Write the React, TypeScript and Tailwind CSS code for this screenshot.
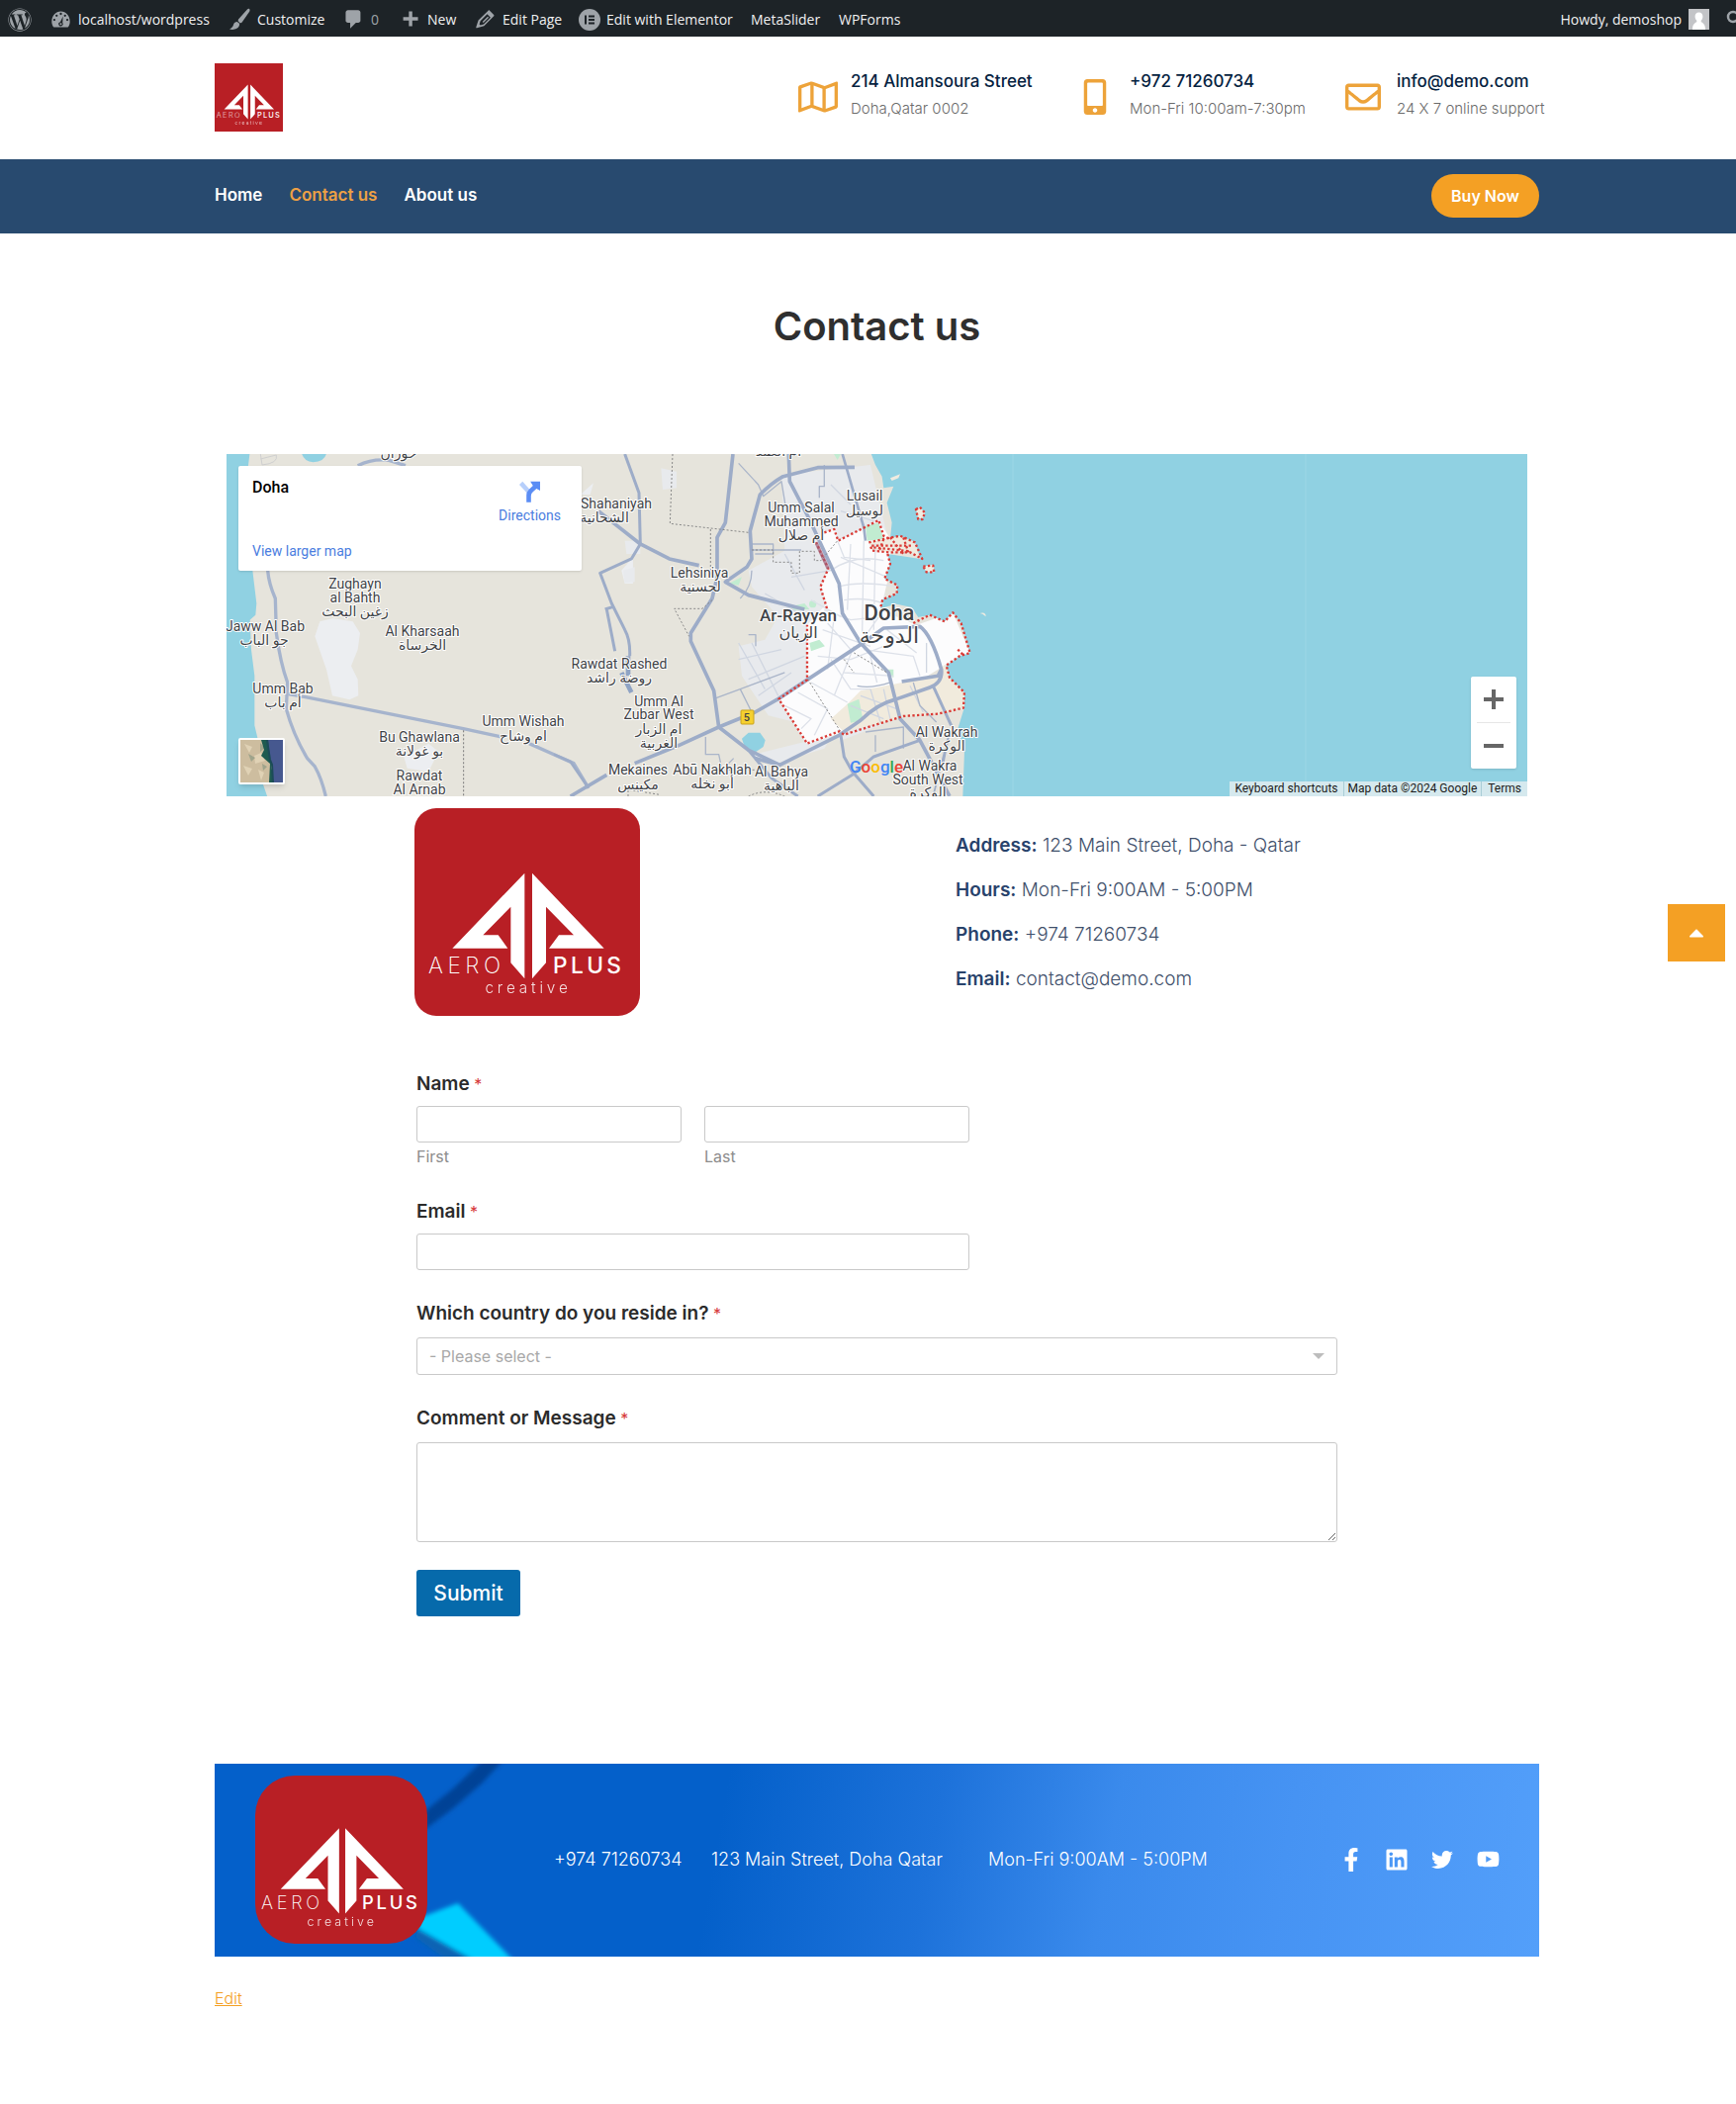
import React from "react";
import {
  FaCaretUp,
  FaFacebookF,
  FaLinkedin,
  FaMobileAlt,
  FaRegEnvelope,
  FaRegMap,
  FaTwitter,
  FaWordpress,
  FaYoutube,
} from "react-icons/fa";

const container = "mx-auto w-full max-w-[1339px]";

function DashIcon({ className, children }: { className?: string; children: React.ReactNode }) {
  return (
    <svg viewBox="0 0 20 20" className={`size-[23px] shrink-0 fill-[#9ea3a8] ${className ?? ""}`} aria-hidden="true">
      {children}
    </svg>
  );
}

function AdminBar() {
  const link = "flex items-center whitespace-nowrap";
  return (
    <div className="flex h-[37px] items-center bg-[#1d2327] pt-[2px] pl-2 font-['Open_Sans',sans-serif] text-[14px] text-[#f0f0f1]">
      <a href="#wp" aria-label="About WordPress" className="mr-[18px]">
        <FaWordpress className="size-6 text-[#9ea3a8]" />
      </a>
      <a href="#site" className={`${link} mr-[17px] w-[164px] gap-[6px]`}>
        <DashIcon>
          <path
            fillRule="evenodd"
            d="M3.8 17h12.4c1.1-1.3 1.8-3 1.8-4.9C18 7 14.500 3 10 3S2 7 2 12.100C2 14 2.700 15.700 3.800 17zM10 4.200a1 1 0 110 2 1 1 0 010-2zM6.300 5.800a1 1 0 110 2 1 1 0 010-2zM13.700 5.800a1 1 0 110 2 1 1 0 010-2zM4.300 9.500a1 1 0 110 2 1 1 0 010-2zM15.700 9.500a1 1 0 110 2 1 1 0 010-2zM11.900 7.300l-.4 5.800a1.900 1.900 0 11-2-.8zM10 13.200a.9.9 0 100 1.800.9.9 0 000-1.800z"
          />
        </DashIcon>
        localhost/wordpress
      </a>
      <a href="#customize" className={`${link} mr-[15px] w-[100px] gap-[6px]`}>
        <DashIcon>
          <path d="M18.300.9c-.5-.4-1.200-.2-1.800.4L8.900 9.800c-.4.500-.6 1.300-.3 1.900l1.500 1.500c.6.300 1.400 0 1.800-.6l6.500-9.400c.5-.8.500-1.700-.1-2.300zM7.600 12.100c-1.500.1-2.700.8-3.100 2.200-.4 1.500-.9 2.900-3.600 4.300 2 .8 7.600.9 8.700-3.500.1-.5.1-.9 0-1.300z" />
        </DashIcon>
        Customize
      </a>
      <a href="#comments" className={`${link} mr-[16px] w-[41px] gap-[6px] text-[#9ea3a8]`} aria-label="0 comments">
        <DashIcon>
          <path d="M5 2h9q.82 0 1.410.59T16 4v7q0 .82-.59 1.410T14 13h-2l-5 5v-5H5q-.82 0-1.410-.59T3 11V4q0-.82.590-1.410T5 2z" />
        </DashIcon>
        0
      </a>
      <a href="#new" className={`${link} mr-[17px] w-[59px] gap-[6px]`}>
        <DashIcon>
          <path d="M17 8v3h-5v5H9v-5H4V8h5V3h3v5h5z" />
        </DashIcon>
        New
      </a>
      <a href="#edit" className={`${link} mr-[14px] w-[92px] gap-[6px]`}>
        <DashIcon>
          <path
            fillRule="evenodd"
            d="M13.900 2.300l3.700 3.700c.3.300.3.800 0 1.200L9 15.800l-6.300 1.900c-.5.100-.8-.2-.7-.7l2-6.100 8.700-8.600c.4-.4.900-.4 1.200 0zM5.800 11.600l-.9 2.800.9.9 2.900-.9 6-6-2.900-2.900zM7.600 12.200l4.600-4.600.9.900-4.600 4.600z"
          />
        </DashIcon>
        Edit Page
      </a>
      <a href="#elementor" className={`${link} mr-[17px] w-[157px] gap-[6px]`}>
        <svg viewBox="0 0 22 22" className="size-[22px] shrink-0" aria-hidden="true">
          <circle cx="11" cy="11" r="11" fill="#9ea3a8" />
          <path d="M6 6.500H8V15.500H6ZM10 6.500H16V8.500H10ZM10 10H16V12H10ZM10 13.500H16V15.500H10Z" fill="#1d2327" />
        </svg>
        Edit with Elementor
      </a>
      <a href="#metaslider" className={`${link} mr-[17px] w-[72px]`}>
        MetaSlider
      </a>
      <a href="#wpforms" className={link}>
        WPForms
      </a>
      <a href="#profile" className={`${link} ml-auto gap-[7px]`}>
        Howdy, demoshop
        <svg viewBox="0 0 21 21" className="size-[21px]" aria-hidden="true">
          <rect width="21" height="21" fill="#c3c4c7" />
          <path d="M10.500 3.500c2.600 0 3.900 1.800 3.900 4.200 0 1.600-.7 3.100-1.700 4v1.600c1.900.9 4.300 2.200 4.300 7.700H4c0-5.500 2.400-6.800 4.300-7.700v-1.600c-1-.9-1.700-2.400-1.700-4 0-2.400 1.300-4.200 3.900-4.200z" fill="#fff" />
        </svg>
      </a>
      <button aria-label="Search" className="mr-2 ml-[17px]">
        <svg viewBox="0 0 20 20" className="size-5" fill="none" stroke="#9ea3a8" strokeWidth="2.500" aria-hidden="true">
          <circle cx="7" cy="7" r="5" />
          <path d="M11 11l7 7" />
        </svg>
      </button>
    </div>
  );
}

function Logo({ className }: { className: string }) {
  return (
    <div className={`overflow-hidden bg-[#b81f25] ${className}`}>
      <svg
        viewBox="0 0 684 630"
        preserveAspectRatio="xMidYMid slice"
        className="size-full"
        role="img"
        aria-label="Aero Plus creative"
      >
        <g fill="#fff">
          <path d="M334 197V517L292 469V299L208 385H254L283 425H115Z" />
          <path d="M357 197L575 425H408L438 385H483L399 299V469L357 517Z" />
        </g>
        <g fill="#fff" fontFamily="Inter, sans-serif">
          <text x="42" y="501" fontSize="68" fontWeight="200" className="tracking-[0.2em]">
            AERO
          </text>
          <text x="420" y="501" fontSize="68" fontWeight="500" className="tracking-[0.15em]">
            PLUS
          </text>
          <text x="345" y="562" fontSize="46" fontWeight="300" textAnchor="middle" opacity="0.85" className="tracking-[0.25em]">
            creative
          </text>
        </g>
      </svg>
    </div>
  );
}

const contacts = [
  { icon: <FaRegMap className="size-10" />, iconBox: "w-[53px]", title: "214 Almansoura Street", sub: "Doha,Qatar 0002", box: "w-[282px]" },
  { icon: <FaMobileAlt className="size-9" />, iconBox: "w-[53px]", title: "+972 71260734", sub: "Mon-Fri 10:00am-7:30pm", box: "w-[271px]" },
  { icon: <FaRegEnvelope className="size-9" />, iconBox: "w-[52px]", title: "info@demo.com", sub: "24 X 7 online support", box: "w-[196px]" },
];

function Header() {
  return (
    <header>
      <div className={`${container} flex h-[124px] items-center justify-between`}>
        <a href="#home">
          <Logo className="-mt-px size-[69px]" />
        </a>
        <ul className="flex pb-[3px]">
          {contacts.map((c) => (
            <li key={c.title} className={`flex items-center ${c.box}`}>
              <span className={`shrink-0 text-[#eda33a] ${c.iconBox}`}>{c.icon}</span>
              <span className="-mt-[3px] whitespace-nowrap">
                <span className="block text-[17px] leading-[27px] font-medium text-[#05223f]">{c.title}</span>
                <span className="block text-[15px] leading-[27px] font-light text-[#6b6b6b]">{c.sub}</span>
              </span>
            </li>
          ))}
        </ul>
      </div>
      <div className="bg-[#284a6f]">
        <div className={`${container} flex h-[75px] items-center justify-between pb-[2px]`}>
          <nav className="flex gap-[27px] text-[17px] font-semibold text-white">
            <a href="#home">Home</a>
            <a href="#contact" className="text-[#eda045]">
              Contact us
            </a>
            <a href="#about">About us</a>
          </nav>
          <a href="#buy" className="flex h-11 w-[109px] items-center justify-center rounded-full bg-[#f4a024] text-[16px] font-semibold text-white">
            Buy Now
          </a>
        </div>
      </div>
    </header>
  );
}

type Label = [string, number, number, number?, number?];

const labels: Label[] = [
  ["حوزان", 174, 4],
  ["أم العمد", 558, 2],
  ["Zughayn", 130, 136],
  ["al Bahth", 130, 150],
  ["زغين البحث", 130, 164],
  ["Jaww Al Bab", 39, 179],
  ["جو الباب", 38, 193],
  ["Al Kharsaah", 198, 184],
  ["الخرساة", 198, 198],
  ["Umm Bab", 57, 242],
  ["أم باب", 57, 256],
  ["Bu Ghawlana", 195, 291],
  ["بو غولانة", 195, 305],
  ["Rawdat", 195, 330],
  ["Al Arnab", 195, 344],
  ["Umm Wishah", 300, 275],
  ["ام وشاح", 300, 290],
  ["Shahaniyah", 394, 55],
  ["الشحانية", 382, 69],
  ["Lehsiniya", 478, 125],
  ["لحسنية", 479, 139],
  ["Rawdat Rashed", 397, 217],
  ["روضة راشد", 397, 231],
  ["Umm Al", 437, 255],
  ["Zubar West", 437, 268],
  ["ام الزبار", 437, 283],
  ["الغربية", 437, 297],
  ["Mekaines", 416, 324],
  ["مكينس", 416, 339],
  ["Abū Nakhlah", 491, 324],
  ["أبو نخله", 491, 338],
  ["Al Bahya", 561, 326],
  ["الباهية", 561, 340],
  ["Umm Salal", 581, 59],
  ["Muhammed", 581, 73],
  ["أم صلال", 581, 87],
  ["Lusail", 645, 47],
  ["لوسيل", 645, 62],
  ["Ar-Rayyan", 578, 169, 17, 500],
  ["الريان", 578, 186, 16],
  ["Doha", 670, 168, 22, 500],
  ["الدوحة", 670, 191, 22],
  ["Al Wakrah", 728, 286],
  ["الوكرة", 728, 300],
  ["Al Wakra", 711, 320],
  ["South West", 709, 334],
  ["الوكرة", 709, 347],
];

/* Both road groups are drawn at three units per map pixel. */
function MapDrawing() {
  return (
    <svg viewBox="0 0 1315 346" preserveAspectRatio="xMinYMin slice" className="absolute inset-0 size-full bg-[#90d1e2]" role="img" aria-label="Map of Doha">
      <rect width="1315" height="346" fill="#90d1e2" />
      <rect width="760" height="346" fill="#e6e4dc" />
      <g transform="translate(-9 -9) scale(0.3333)" fill="none" strokeLinejoin="round">
        <path fill="#90d1e2" d="M20 20H98L92 70L100 130L106 380L118 480L115 515L98 530L102 620L112 700L112 850L124 900L128 1000L152 1070H20Z" />
        <path fill="#90d1e2" d="M255 25H330Q325 50 290 52Q262 50 255 25Z" />
        <path fill="#eceef1" d="M310 535L350 525L410 535L432 570L425 620L405 670L425 710L427 760L400 772L348 760L330 680L295 580Z" />
        <path fill="#eceef1" d="M565 945L640 905L670 930L640 990L575 980ZM1225 380L1260 340V420H1235ZM1100 150L1140 115L1130 150Z" />
        <path stroke="#cfcfcf" strokeWidth="3" d="M130 27L135 60M130 42L178 30Q185 55 135 60" />
        <g stroke="#a6b4cd" strokeWidth="10">
          <path d="M152 380Q155 420 175 465L178 570Q190 660 212 720L208 800Q230 880 272 950L295 975Q315 1010 328 1065" />
          <path d="M425 62Q470 40 520 46L570 62" />
          <path d="M215 755L270 765L745 860L860 885" />
          <path d="M945 905L1080 965L1125 1040" />
        </g>
        <path stroke="#777" strokeWidth="3" strokeDasharray="6 6" d="M746 865V1065" />
      </g>
      <g transform="translate(331 -9) scale(0.3333)" fill="none" strokeLinejoin="round">
        <path fill="#e8eaed" d="M690 90L960 60L1010 270L1000 560L680 770L760 900L600 940L660 970L820 920L850 870L650 820L570 700L560 610L640 590L680 520L600 430L590 380L700 320Z" />
        <path fill="#e8eaed" d="M325 70L372 80V130L330 135ZM215 290L262 290V330H220ZM210 380L245 370V415L215 418ZM680 770L770 905L860 870L880 960L1100 900V830L900 860Z" />
        <path fill="#fcfcfd" d="M820 265L850 255L862 290L985 230L1025 290L1015 400L990 500L1100 545L1210 508L1262 630L1190 665L1100 720L1040 760L880 870L768 905L682 770L768 712V545L828 480L808 430L832 375L795 295Z" />
        <path fill="#f1ebdd" d="M930 745L1160 700L1185 665L1245 755V795L1165 815L1060 825L880 870L840 830L890 785Z" />
        <path fill="#e6e4dc" d="M860 900L1040 830L1200 820L1245 860V1065H880Z" />
        <g fill="#c1ecd1">
          <path d="M945 245L985 235L1000 285L950 290ZM775 600L805 590L822 610L780 625ZM890 785L925 770L938 835L900 842ZM845 20L870 27L860 45ZM530 420L570 400L560 425ZM1012 680H1030V705L1012 695Z" />
          <circle cx="785" cy="482" r="11" />
          <path d="M715 490L760 480L775 498L730 500Z" />
        </g>
        <path
          fill="#90d1e2"
          d="M960 20L975 60L995 95L1000 130L1030 125L1010 175L1025 235L1020 285L1090 290L1112 345L1012 330L1020 360L1003 405L1042 425L1040 450L997 468L990 495L1040 482L1085 492L1105 522L1140 515L1185 535L1210 508L1235 540L1262 630L1230 640L1190 668L1200 705L1245 750L1245 795L1225 860L1245 930L1240 1070H3000V20Z"
        />
        <path fill="#90d1e2" d="M570 890L590 872L625 872L641 895L635 915L605 935L580 920Z" />
        <g fill="#f0ebe0">
          <path d="M1020 100L1050 88L1045 100L1025 108ZM1098 195L1110 188L1125 205L1118 222L1105 222ZM1120 368L1150 362L1155 385L1130 385ZM955 295L1050 275L1095 295L1112 345L1080 320L1015 325L965 320ZM1292 510Q1310 505 1310 520L1300 512Z" />
        </g>
        <g stroke="#dde1e9" strokeWidth="4">
          <path d="M840 380Q910 330 1000 350M860 430Q930 410 1040 430M880 470Q940 460 1000 480M900 300L890 500M940 290L935 570M975 300L970 560M870 340L1010 400M820 500L900 530L1000 520M815 560L900 590L960 610M800 640L900 650L1000 610M860 290L880 340L960 350M1000 500L930 600M830 540L900 620M780 470L870 520M850 520L830 680M940 620L1090 640L1110 700M960 640L980 720M1010 560L1100 630M880 690L1030 700M910 610L850 760M840 650L900 740L960 740M780 720L890 780M740 750L830 800L790 880M700 790L780 830L750 860" />
          <path stroke="#d0d6e1" d="M560 600L640 740M600 600L680 760M560 650L690 620M590 710L760 640M620 760L720 690M640 450L760 520M700 330L760 440M720 400L840 380M930 760L1040 800M960 740L990 840M1000 740L1020 830M900 790L1000 830M1080 730L1120 810M1130 600V690M870 200L970 230M840 120L900 180" />
        </g>
        <g stroke="#aab5c9" strokeWidth="4">
          <path d="M560 55L620 120L635 155L690 110L705 200M600 300H665V330H610M600 318H750M490 768L565 740L600 810M565 740L700 690M600 380Q600 430 565 465M460 885V938H500L510 985L545 950M945 870L1060 855V920M975 880V930M590 575H612V610M820 60V125H805V160M920 730Q960 740 1020 720M1090 720L1110 790L1160 840" />
        </g>
        <g stroke="#9dacc8" strokeWidth="11">
          <path d="M215 27L258 145L262 300L235 345L140 388L175 480L215 560Q232 590 230 640M155 498L180 490M160 498L185 625" strokeWidth="9" />
          <path d="M135 200L262 300L350 345L440 365" />
          <path d="M543 27L520 235L495 280V400L480 465L415 570V595L485 745L500 855L590 925L685 970" />
          <path d="M912 67L800 68L695 95Q660 115 625 150L595 260L600 345L585 370L520 415L590 455L760 498" />
          <path d="M712 27L715 110L775 225L865 420L875 510L930 600L1015 690L1050 830L1110 895L1200 1065" />
          <path d="M875 27L940 250L945 290" strokeWidth="8" />
          <path d="M50 1065L160 1000M245 965L380 910L500 855L610 810L680 770L930 605L1000 555L1110 550Q1145 575 1175 680L1165 700L1055 717M1175 680Q1180 720 1140 735L1040 770Q980 785 930 835L865 880L685 970L610 950" />
          <path d="M870 880L880 945L905 990L970 1065M800 1065L905 1000L970 945L1110 895M1150 730L1205 850M590 925L660 1010L740 1065" strokeWidth="9" />
          <path d="M0 938L50 960L105 1040" strokeWidth="8" />
          <path d="M1180 970L1200 870L1150 1065" strokeWidth="5" />
        </g>
        <path stroke="#8fa3c4" strokeWidth="14" d="M205 690L235 750M225 640V700" />
        <g stroke="#888" strokeWidth="3" strokeDasharray="6 6">
          <path d="M360 27L352 238L590 265M475 255V400M480 470L450 496H365L410 580M600 318H665V355H720V388H745V322H790V350H810L860 290M770 710L870 870M910 630L1010 690M880 650L910 690M530 985H620M225 1065V1045L320 1060M590 1065Q640 1040 700 1065" />
        </g>
        <g stroke="#da3b36" strokeWidth="7" strokeDasharray="7 7">
          <path d="M820 265L850 255L862 290L985 228L1000 275L1020 285M1012 330L1020 360L1003 405L1042 425L1040 450L997 468L990 495M1090 540L1140 515L1185 535L1210 508L1235 540L1262 630L1230 640L1190 668L1200 705L1245 750L1242 797L1165 815L1060 822L880 878L865 868L768 905L682 770L768 712V545M828 495L808 430L832 375L795 295" />
          <path d="M955 295L1000 285L1050 275L1095 295L1117 345L1080 325L1015 325L965 320L960 305L1090 305M970 310L1080 322M1020 280L1060 330M1000 285L985 325M1060 280L1075 325" />
          <path d="M1098 195L1110 188L1125 205L1118 225L1105 225ZM1120 368L1150 365L1153 385L1130 385ZM1225 620L1240 635" />
        </g>
        <path stroke="#9c5a73" strokeWidth="10" d="M795 295L832 375" opacity="0.7" />
      </g>
      <path stroke="#a5dbe9" strokeWidth="1" d="M795 0V346M1091 0V346" opacity="0.6" />
      <rect x="520" y="259" width="13" height="14" rx="1" fill="#f5d02f" stroke="#c9a21b" />
      <text x="526" y="270" fontSize="11" fontWeight="500" textAnchor="middle" fill="#444" fontFamily="Roboto, sans-serif">
        5
      </text>
      <g fontFamily="Roboto, 'DejaVu Sans', sans-serif" textAnchor="middle" fill="#3f4347" stroke="#fff" strokeWidth="2" strokeLinejoin="round" paintOrder="stroke">
        {labels.map(([text, x, y, size, weight]) => (
          <text key={`${text}-${y}`} x={x} y={y} fontSize={size ?? 14} fontWeight={weight ?? 400}>
            {text}
          </text>
        ))}
      </g>
    </svg>
  );
}

const googleLetters = [
  ["G", "text-[#4285f4]"],
  ["o", "text-[#ea4335]"],
  ["o", "text-[#fbbc05]"],
  ["g", "text-[#4285f4]"],
  ["l", "text-[#34a853]"],
  ["e", "text-[#ea4335]"],
];

function MapPanel() {
  return (
    <section className="relative mx-3 h-[346px] overflow-hidden font-[Roboto,sans-serif]" aria-label="Map">
      <MapDrawing />
      <div className="absolute top-[307px] left-[630px] text-[17px] leading-[18px] font-medium">
        {googleLetters.map(([letter, color], i) => (
          <span key={i} className={color}>
            {letter}
          </span>
        ))}
      </div>
      <div className="absolute top-3 left-3 flex h-[106px] w-[347px] justify-between rounded-[2px] bg-white px-[14px] pt-[13px] pb-[11px] text-[14px] leading-[18px] text-[#4a7de0] shadow">
        <div className="flex flex-col justify-between">
          <p className="text-[16px] font-medium text-black">Doha</p>
          <a href="#larger">View larger map</a>
        </div>
        <a href="#directions" className="mr-[7px] flex flex-col items-center gap-[4px]">
          <svg viewBox="0 0 64 66" className="mt-[2px] h-[22px] w-[21px]" aria-hidden="true">
            <path d="M0 12L10 2L32 26L26 40Z" fill="#b7cffb" />
            <path d="M22 66V44Q22 34 30 26L42 15L34 2H64V30L53 24L42 34Q36 39 36 46V66Z" fill="#5b8df5" />
          </svg>
          Directions
        </a>
      </div>
      <button aria-label="Show satellite imagery" className="absolute bottom-3 left-3 size-[47px] overflow-hidden rounded-[2px] border-2 border-white shadow-md">
        <svg viewBox="0 0 43 43" className="size-full">
          <rect width="43" height="43" fill="#cdbd9f" />
          <path d="M4 4l8 3-3 6zM14 16l7-3 4 8-10 3zM3 26l9 3-4 7zM18 30l6 3-3 8z" fill="#e0d2b5" />
          <path d="M8 14l7 4-4 4zM20 3l5 5-5 4zM22 24l5 3-4 4z" fill="#9fa48b" />
          <path d="M21 0H30L31 18V28L34 36L33 43H29L30 24L21 16L24 10Z" fill="#1e5b50" />
          <path d="M28 0H43V43H33L32 25L30 20Z" fill="#46588f" />
          <path d="M27 0L30 20L32 25L33 43" fill="none" stroke="#1c4b58" strokeWidth="2" />
        </svg>
      </button>
      <div className="absolute right-[11px] bottom-7 flex w-[46px] flex-col items-center rounded-[2px] bg-white shadow">
        <button aria-label="Zoom in" className="flex h-[46px] w-full items-center justify-center">
          <svg viewBox="0 0 20 20" className="size-5" stroke="#666" strokeWidth="4">
            <path d="M10 0V20M0 10H20" />
          </svg>
        </button>
        <span className="h-px w-[34px] bg-[#e6e6e6]" />
        <button aria-label="Zoom out" className="flex h-[46px] w-full items-center justify-center">
          <svg viewBox="0 0 20 20" className="size-5" stroke="#666" strokeWidth="4">
            <path d="M0 10H20" />
          </svg>
        </button>
      </div>
      <div className="absolute right-0 bottom-0 flex divide-x divide-[#a9cdd6] bg-[#d5e9ee] text-[12px] leading-[15px] text-[#1c1c1c]">
        <button className="px-[5px]">Keyboard shortcuts</button>
        <span className="px-[4px]">Map data ©2024 Google</span>
        <a href="#terms" className="px-[6px]">
          Terms
        </a>
      </div>
    </section>
  );
}

const details = [
  ["Address:", "123 Main Street, Doha - Qatar"],
  ["Hours:", "Mon-Fri 9:00AM - 5:00PM"],
  ["Phone:", "+974 71260734"],
  ["Email:", "contact@demo.com"],
];

const labelClass = "block text-[19px] leading-[24px] font-semibold text-[#2b2b2b]";
const fieldClass = "block w-full rounded-[3px] border border-[#c9c9c9] bg-white";

function Required() {
  return (
    <span aria-hidden="true" className="text-[16px] font-normal text-[#d63637]">
      {" *"}
    </span>
  );
}

function ContactForm() {
  return (
    <form className="w-full max-w-[931px] pt-[57px]" onSubmit={(e) => e.preventDefault()}>
      <fieldset>
        <legend className={labelClass}>
          Name
          <Required />
        </legend>
        <div className="mt-[10px] flex max-w-[559px] gap-[23px]">
          <div className="flex-1">
            <input id="first" type="text" className={`${fieldClass} h-[37px] px-3`} />
            <label htmlFor="first" className="mt-[2px] block text-[16px] leading-[24px] text-[#8c8c8c]">
              First
            </label>
          </div>
          <div className="flex-1">
            <input id="last" type="text" className={`${fieldClass} h-[37px] px-3`} />
            <label htmlFor="last" className="mt-[2px] block text-[16px] leading-[24px] text-[#8c8c8c]">
              Last
            </label>
          </div>
        </div>
      </fieldset>
      <div className="mt-[32px]">
        <label htmlFor="email" className={labelClass}>
          Email
          <Required />
        </label>
        <input id="email" type="email" className={`${fieldClass} mt-[10px] h-[37px] max-w-[559px] px-3`} />
      </div>
      <div className="mt-[32px]">
        <label htmlFor="country" className={labelClass}>
          Which country do you reside in?
          <Required />
        </label>
        <div className="relative mt-[12px]">
          <select id="country" className={`${fieldClass} h-[38px] appearance-none px-3 text-[16px] text-[#a8a8a8]`}>
            <option>- Please select -</option>
          </select>
          <svg viewBox="0 0 12 6" className="pointer-events-none absolute top-4 right-[13px] h-[6px] w-3 fill-[#bdbdbd]" aria-hidden="true">
            <path d="M0 0H12L6 6Z" />
          </svg>
        </div>
      </div>
      <div className="mt-[32px]">
        <label htmlFor="message" className={labelClass}>
          Comment or Message
          <Required />
        </label>
        <textarea id="message" className={`${fieldClass} mt-[12px] h-[101px] resize-y px-3 py-2`} />
      </div>
      <button type="submit" className="mt-[28px] h-[47px] w-[105px] rounded-[3px] bg-[#066aab] text-[21px] font-medium text-white">
        Submit
      </button>
    </form>
  );
}

const socials = [
  { name: "Facebook", icon: <FaFacebookF className="size-6" /> },
  { name: "LinkedIn", icon: <FaLinkedin className="size-6" /> },
  { name: "Twitter", icon: <FaTwitter className="size-[22px]" /> },
  { name: "YouTube", icon: <FaYoutube className="size-[23px]" /> },
];

function Footer() {
  return (
    <footer className="relative flex h-[195px] items-center overflow-hidden bg-[linear-gradient(100deg,#0460ca_38%,#1d72da_54%,#3a8aec_67%,#4693f3_80%,#539ffa_100%)] pr-[29px] pb-[2px] pl-[41px] text-white">
      <svg viewBox="0 0 1339 195" preserveAspectRatio="xMinYMin slice" className="absolute inset-0 size-full" aria-hidden="true">
        <defs>
          <filter id="soft" x="-20%" y="-20%" width="140%" height="140%">
            <feGaussianBlur stdDeviation="2" />
          </filter>
        </defs>
        <g filter="url(#soft)">
          <path d="M205 72L240 46L270 20L296 -8H276L240 26L205 54Z" fill="#024396" />
          <path d="M206 156L246 141L303 200H264L206 167Z" fill="#04cdff" />
          <path d="M205 167L262 199H235L203 176Z" fill="#0763b4" />
        </g>
      </svg>
      <Logo className="relative h-[170px] w-[174px] rounded-[40px]" />
      <ul className="relative ml-[128px] grid grid-cols-[159px_280px_auto] text-[18px] font-light whitespace-nowrap">
        <li>+974 71260734</li>
        <li>123 Main Street, Doha Qatar</li>
        <li>Mon-Fri 9:00AM - 5:00PM</li>
      </ul>
      <div className="relative ml-auto flex">
        {socials.map((s) => (
          <a key={s.name} href={`#${s.name}`} aria-label={s.name} className="flex w-[46px] items-center justify-center">
            {s.icon}
          </a>
        ))}
      </div>
    </footer>
  );
}

export default function App() {
  return (
    <div className="relative min-h-screen overflow-x-hidden bg-white font-[Inter,sans-serif]">
      <div className="w-[calc(100%+18px)]">
        <AdminBar />
        <Header />
        <main className={container}>
          <h1 className="pt-[70px] text-center text-[40px] leading-[48px] font-semibold text-[#2f2f2f]">Contact us</h1>
          <div className="mt-[105px]">
            <MapPanel />
          </div>
          <div className="ml-[202px] flex pt-3">
            <Logo className="h-[210px] w-[228px] rounded-[22px]" />
            <ul className="mt-[15px] ml-[319px] text-[19px] leading-[45px] font-light whitespace-nowrap text-[#3f506b]">
              {details.map(([name, value]) => (
                <li key={name}>
                  <strong className="font-semibold text-[#28426b]">{name}</strong> {value}
                </li>
              ))}
            </ul>
          </div>
          <div className="ml-[204px]">
            <ContactForm />
          </div>
          <div className="mt-[149px]">
            <Footer />
          </div>
          <a href="#edit-page" className="mt-[30px] inline-block text-[16px] leading-6 font-light text-[#f4a024] underline">
            Edit
          </a>
        </main>
      </div>
      <a href="#top" aria-label="Back to top" className="absolute top-[914px] right-[11px] flex size-[58px] items-center justify-center bg-[#f4a024] text-white">
        <FaCaretUp className="size-6" />
      </a>
    </div>
  );
}
